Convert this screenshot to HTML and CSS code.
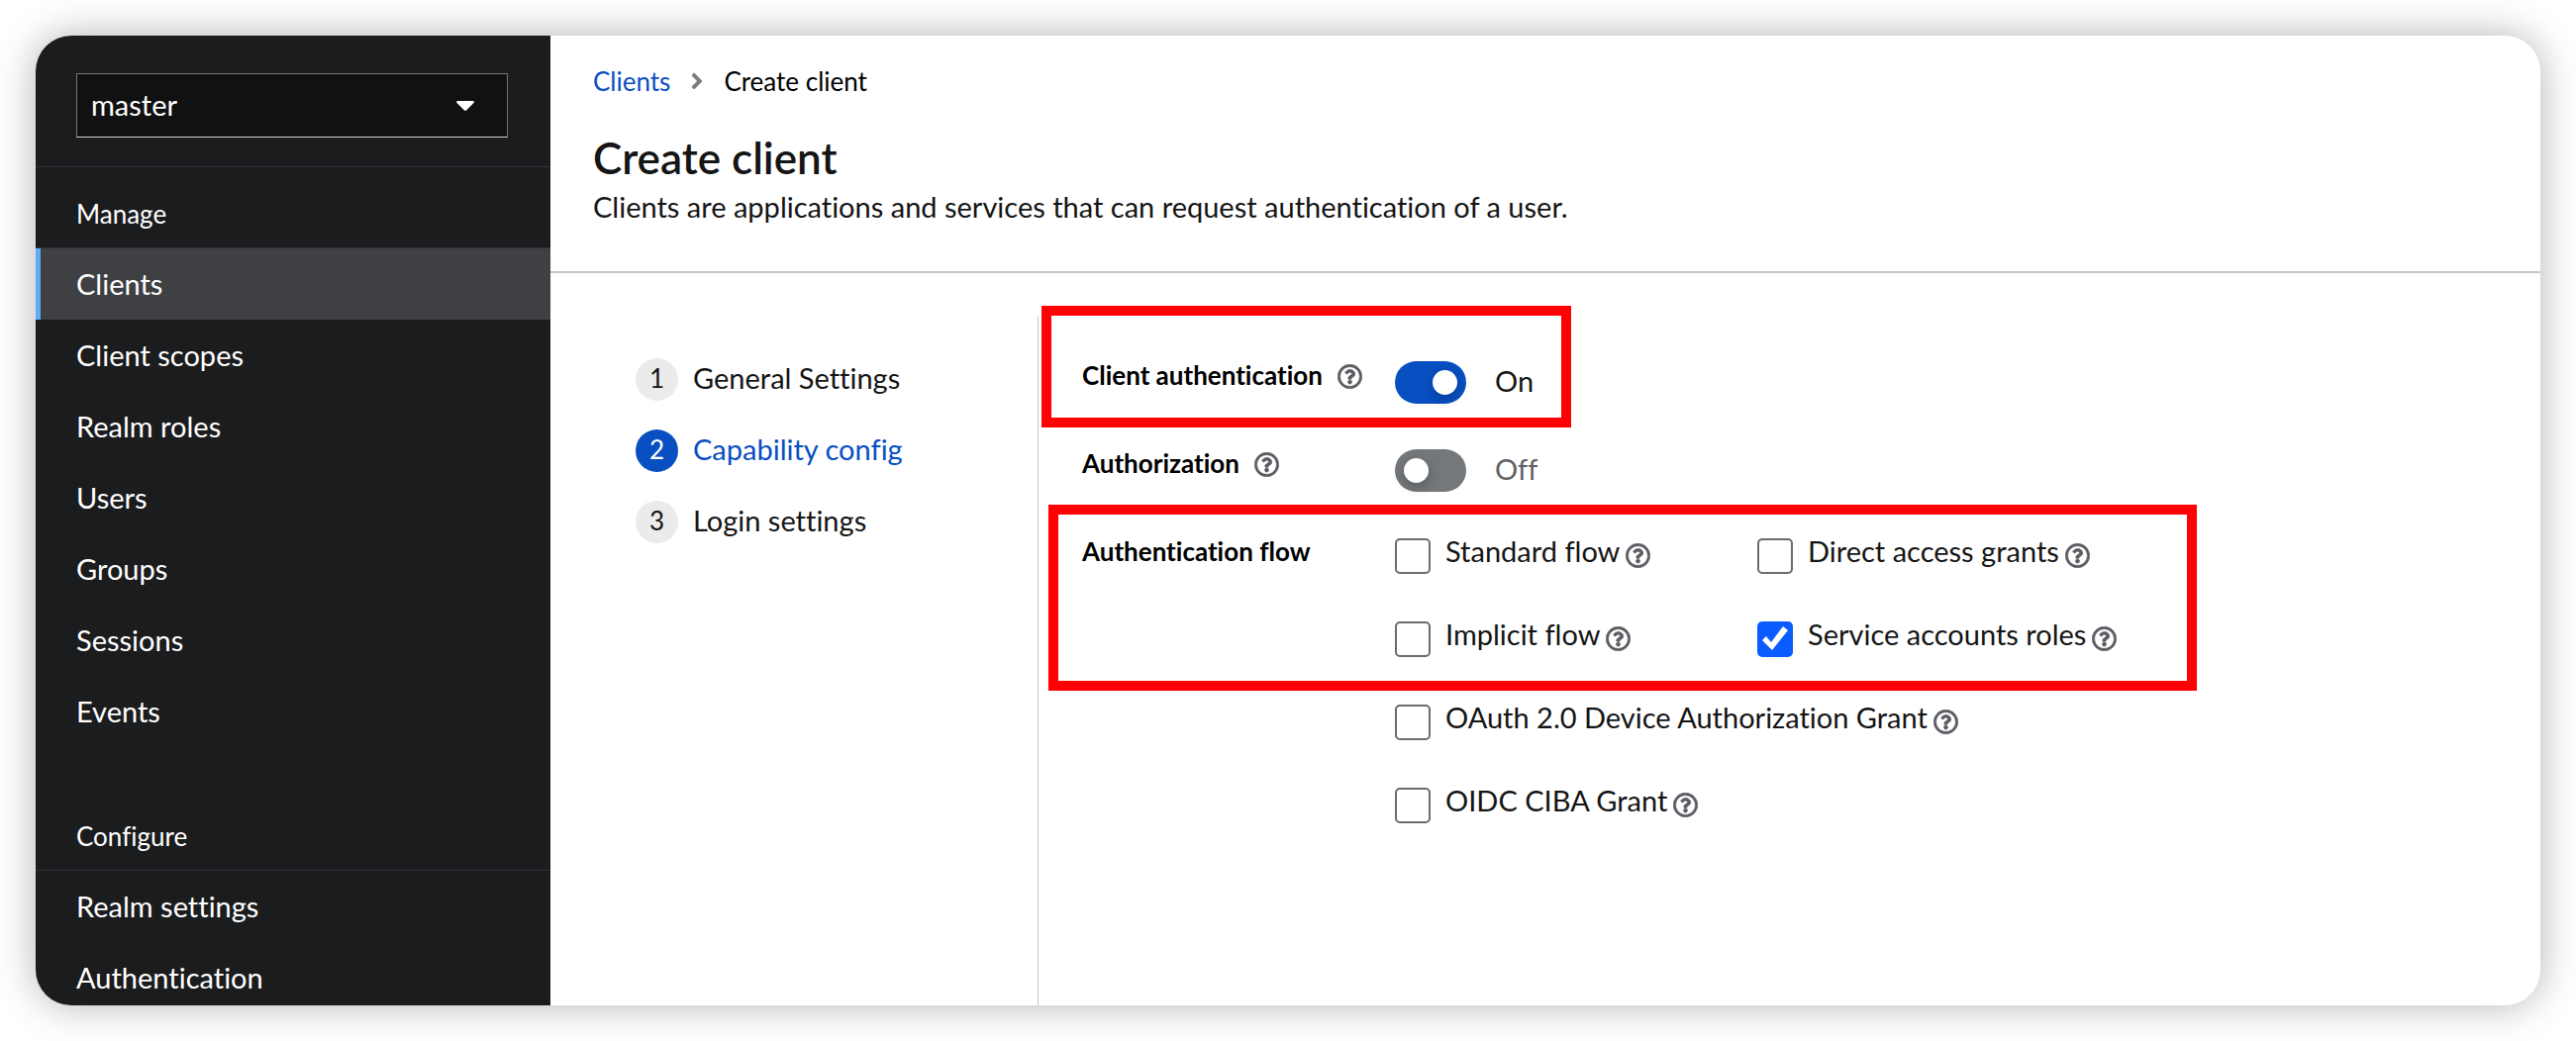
FILE: index.html
```html
<!DOCTYPE html>
<html lang="en">
<head>
    <meta charset="UTF-8">
    <title>Create client</title>
    <link rel="stylesheet" href="styles.css">
</head>
<body>
    <svg class="sprite" aria-hidden="true">
        <symbol id="icon-help" viewBox="2 2 508 508">
            <path stroke-width="12" d="M256 8C119.043 8 8 119.083 8 256c0 136.997 111.043 248 248 248s248-111.003 248-248C504 119.083 392.957 8 256 8zm0 448c-110.532 0-200-89.431-200-200 0-110.495 89.472-200 200-200 110.491 0 200 89.471 200 200 0 110.53-89.431 200-200 200zm107.244-255.2c0 67.052-72.421 68.084-72.421 92.863V300c0 6.627-5.373 12-12 12h-45.647c-6.627 0-12-5.373-12-12v-8.659c0-35.745 27.1-50.034 47.579-61.516 17.561-9.845 28.324-16.541 28.324-29.579 0-17.246-21.999-28.693-39.784-28.693-23.189 0-33.894 10.977-48.942 29.969-4.057 5.12-11.46 6.071-16.666 2.124l-27.824-21.098c-5.107-3.872-6.251-11.066-2.644-16.363C184.846 131.491 214.94 112 261.794 112c49.071 0 101.45 38.304 101.45 88.8zM298 368c0 23.159-18.841 42-42 42s-42-18.841-42-42 18.841-42 42-42 42 18.841 42 42z"/>
        </symbol>
    </svg>

    <div class="window">
        <aside class="sidebar">
            <div class="realm">
                <select class="realm-select" aria-label="Realm">
                    <option>master</option>
                </select>
                <svg class="realm-caret" viewBox="0 0 18 10" aria-hidden="true"><path d="M1.500 0h15c1.200 0 1.800 1.200 1 2L10 9.500c-.6.600-1.400.600-2 0L.5 2C-.3 1.200.3 0 1.500 0z"/></svg>
            </div>
            <nav class="nav-section" aria-labelledby="nav-manage">
                <h2 class="nav-title" id="nav-manage">Manage</h2>
                <ul class="nav-list">
                    <li><a class="nav-link current" href="#clients" aria-current="page">Clients</a></li>
                    <li><a class="nav-link" href="#client-scopes">Client scopes</a></li>
                    <li><a class="nav-link" href="#realm-roles">Realm roles</a></li>
                    <li><a class="nav-link" href="#users">Users</a></li>
                    <li><a class="nav-link" href="#groups">Groups</a></li>
                    <li><a class="nav-link" href="#sessions">Sessions</a></li>
                    <li><a class="nav-link" href="#events">Events</a></li>
                </ul>
            </nav>
            <nav class="nav-section" aria-labelledby="nav-configure">
                <h2 class="nav-title" id="nav-configure">Configure</h2>
                <ul class="nav-list">
                    <li><a class="nav-link" href="#realm-settings">Realm settings</a></li>
                    <li><a class="nav-link" href="#authentication">Authentication</a></li>
                </ul>
            </nav>
        </aside>

        <main class="main">
            <header class="page-header">
                <nav class="breadcrumb" aria-label="Breadcrumb">
                    <a href="#clients">Clients</a>
                    <svg class="breadcrumb-arrow" viewBox="0 0 256 512" aria-hidden="true"><path d="M224.300 273l-136 136c-9.400 9.400-24.600 9.400-33.900 0l-22.600-22.600c-9.400-9.400-9.400-24.600 0-33.900l96.400-96.400-96.400-96.400c-9.400-9.400-9.400-24.600 0-33.900L54.300 103c9.400-9.400 24.600-9.400 33.900 0l136 136c9.500 9.400 9.500 24.600.1 34z"/></svg>
                    <span>Create client</span>
                </nav>
                <h1>Create client</h1>
                <p>Clients are applications and services that can request authentication of a user.</p>
            </header>

            <div class="wizard">
                <ol class="steps">
                    <li><button type="button" class="step"><span class="step-number">1</span>General Settings</button></li>
                    <li><button type="button" class="step current" aria-current="step"><span class="step-number">2</span>Capability config</button></li>
                    <li><button type="button" class="step"><span class="step-number">3</span>Login settings</button></li>
                </ol>

                <form class="form">
                    <div class="row">
                        <div class="row-label">
                            <label for="client-auth">Client authentication</label>
                            <button type="button" class="help" aria-label="Help for client authentication"><svg><use href="#icon-help"/></svg></button>
                        </div>
                        <div class="switch">
                            <input type="checkbox" role="switch" id="client-auth" checked>
                            <label for="client-auth">On</label>
                        </div>
                        <div class="highlight highlight-auth"></div>
                    </div>

                    <div class="row">
                        <div class="row-label">
                            <label for="authorization">Authorization</label>
                            <button type="button" class="help" aria-label="Help for authorization"><svg><use href="#icon-help"/></svg></button>
                        </div>
                        <div class="switch off">
                            <input type="checkbox" role="switch" id="authorization">
                            <label for="authorization">Off</label>
                        </div>
                    </div>

                    <div class="row" role="group" aria-labelledby="flow-label">
                        <div class="row-label"><span id="flow-label">Authentication flow</span></div>
                        <div class="flows">
                            <div class="check">
                                <input type="checkbox" id="standard-flow">
                                <label for="standard-flow">Standard flow</label>
                                <button type="button" class="help" aria-label="Help for standard flow"><svg><use href="#icon-help"/></svg></button>
                            </div>
                            <div class="check">
                                <input type="checkbox" id="direct-access">
                                <label for="direct-access">Direct access grants</label>
                                <button type="button" class="help" aria-label="Help for direct access grants"><svg><use href="#icon-help"/></svg></button>
                            </div>
                            <div class="check">
                                <input type="checkbox" id="implicit-flow">
                                <label for="implicit-flow">Implicit flow</label>
                                <button type="button" class="help" aria-label="Help for implicit flow"><svg><use href="#icon-help"/></svg></button>
                            </div>
                            <div class="check">
                                <input type="checkbox" id="service-accounts" checked>
                                <label for="service-accounts">Service accounts roles</label>
                                <button type="button" class="help" aria-label="Help for service accounts roles"><svg><use href="#icon-help"/></svg></button>
                            </div>
                            <div class="check wide">
                                <input type="checkbox" id="device-grant">
                                <label for="device-grant">OAuth 2.0 Device Authorization Grant</label>
                                <button type="button" class="help" aria-label="Help for OAuth 2.0 device authorization grant"><svg><use href="#icon-help"/></svg></button>
                            </div>
                            <div class="check wide">
                                <input type="checkbox" id="ciba-grant">
                                <label for="ciba-grant">OIDC CIBA Grant</label>
                                <button type="button" class="help" aria-label="Help for OIDC CIBA grant"><svg><use href="#icon-help"/></svg></button>
                            </div>
                        </div>
                        <div class="highlight highlight-flow"></div>
                    </div>
                </form>
            </div>
        </main>
    </div>
</body>
</html>
```
FILE: styles.css
```css
* {
    box-sizing: border-box;
}
body {
    margin: 0;
    padding: 36px;
    background: #fff;
    color: #151515;
    font-family: Lato, "Open Sans", sans-serif;
    font-size: 29px;
    font-variant-ligatures: none;
    line-height: 38px;
}
h1, h2, p, ul, ol {
    margin: 0;
    padding: 0;
}
ul, ol {
    list-style: none;
}
a {
    color: #084fc2;
    text-decoration: none;
}
button, select {
    font: inherit;
}
.sprite {
    display: none;
}
.window {
    display: flex;
    height: calc(100vh - 72px);
    border-radius: 36px;
    overflow: hidden;
    background: #fff;
    box-shadow: 0 0 40px rgba(0, 0, 0, 0.3);
}

/* Sidebar */
.sidebar {
    flex: 0 0 520px;
    overflow: hidden;
    background: #1b1c1e;
    color: #fff;
}
.realm {
    display: grid;
    align-items: center;
    padding: 38px 43px 29px 41px;
    border-bottom: 1px solid #303134;
}
.realm-select {
    grid-area: 1 / 1;
    height: 65px;
    padding: 0 14px 2px;
    appearance: none;
    border: 1px solid #74777a;
    border-bottom-color: #d2d2d2;
    border-radius: 0;
    background: #111;
    color: #fff;
}
.realm-caret {
    grid-area: 1 / 1;
    justify-self: end;
    width: 18px;
    height: 10px;
    margin-right: 34px;
    fill: #fff;
    pointer-events: none;
}
.nav-section + .nav-section {
    margin-top: 43px;
}
.nav-title {
    padding: 28px 41px 15px;
    border-bottom: 1px solid #303134;
    font-size: 26px;
    font-weight: 400;
}
.nav-link {
    display: block;
    padding: 17px 36px;
    border-left: 5px solid transparent;
    color: #fff;
}
.nav-link.current {
    border-left-color: #5fabf5;
    background: #3f4044;
}

/* Page header */
.main {
    display: flex;
    flex: 1;
    flex-direction: column;
    min-width: 0;
}
.page-header {
    padding: 27px 43px 44px;
    border-bottom: 2px solid #c7c7c7;
}
.breadcrumb {
    display: flex;
    align-items: center;
    gap: 20px;
    margin-bottom: 30px;
    color: #000;
    font-size: 26px;
}
.breadcrumb-arrow {
    width: 14px;
    height: 26px;
    fill: #7b7e82;
}
h1 {
    font-size: 44px;
    font-weight: 600;
    line-height: 56px;
}
.page-header p {
    line-height: 43px;
}

/* Wizard */
.wizard {
    display: flex;
    flex: 1;
    margin-top: 43px;
}
.steps {
    display: flex;
    flex: 0 0 493px;
    flex-direction: column;
    gap: 29px;
    padding: 43px 20px 0 86px;
    border-right: 1px solid #c7c7c7;
}
.step {
    display: flex;
    gap: 15px;
    padding: 0;
    border: 0;
    background: none;
    color: #151515;
    line-height: 40px;
    cursor: pointer;
}
.step-number {
    width: 43px;
    height: 43px;
    border-radius: 50%;
    background: #ebebeb;
    font-size: 26px;
    text-align: center;
}
.step.current {
    color: #084fc2;
}
.step.current .step-number {
    background: #084fc2;
    color: #fff;
}

/* Form */
.form {
    display: flex;
    flex: 1;
    flex-direction: column;
    gap: 41px;
    padding: 41px 44px 0;
}
.row {
    position: relative;
    display: grid;
    grid-template-columns: 316px 1fr;
}
.row-label {
    display: flex;
    align-items: flex-start;
    gap: 15px;
    color: #000;
    font-size: 26px;
    font-weight: 700;
}
.help {
    display: flex;
    margin-top: 8px;
    padding: 0;
    border: 0;
    background: none;
    cursor: pointer;
}
.help svg {
    width: 25px;
    height: 25px;
    fill: #5a5c61;
    stroke: #5a5c61;
}
.switch {
    display: flex;
    gap: 29px;
    padding-top: 5px;
    line-height: 40px;
}
.switch.off {
    color: #5f6166;
}
.switch input {
    display: flex;
    align-items: center;
    width: 72px;
    height: 43px;
    margin: 0;
    padding: 0 9px;
    appearance: none;
    border-radius: 22px;
    background: #75787b;
}
.switch input::before {
    content: "";
    width: 25px;
    height: 25px;
    border-radius: 50%;
    background: #fff;
    box-shadow: 0 4px 12px rgba(0, 0, 0, 0.25);
}
.switch input:checked {
    justify-content: flex-end;
    background: #084fc2;
}
.flows {
    display: grid;
    grid-template-columns: 366px 1fr;
    gap: 42px 0;
}
.check {
    display: flex;
    align-items: flex-start;
}
.check.wide {
    grid-column: 1 / -1;
}
.check input {
    width: 36px;
    height: 36px;
    margin: 6px 15px 0 0;
    appearance: none;
    border: 2px solid #6b6b6b;
    border-radius: 5px;
    background: #fff;
}
.check input:checked {
    border: 0;
    background: #0b5cff;
}
.check input:checked::before {
    content: "";
    display: block;
    height: 36px;
    background: #fff;
    clip-path: polygon(5px 19px, 9px 15px, 14px 21px, 26px 5px, 31px 9px, 15px 29px);
}
.check .help {
    margin: 11px 0 0 6px;
}

/* Red frames drawn over the form */
.highlight {
    position: absolute;
    border: 10px solid #ff0005;
    pointer-events: none;
}
.highlight-auth {
    top: -51px;
    left: -41px;
    width: 535px;
    height: 123px;
}
.highlight-flow {
    top: -28px;
    left: -34px;
    width: 1160px;
    height: 188px;
}
```
